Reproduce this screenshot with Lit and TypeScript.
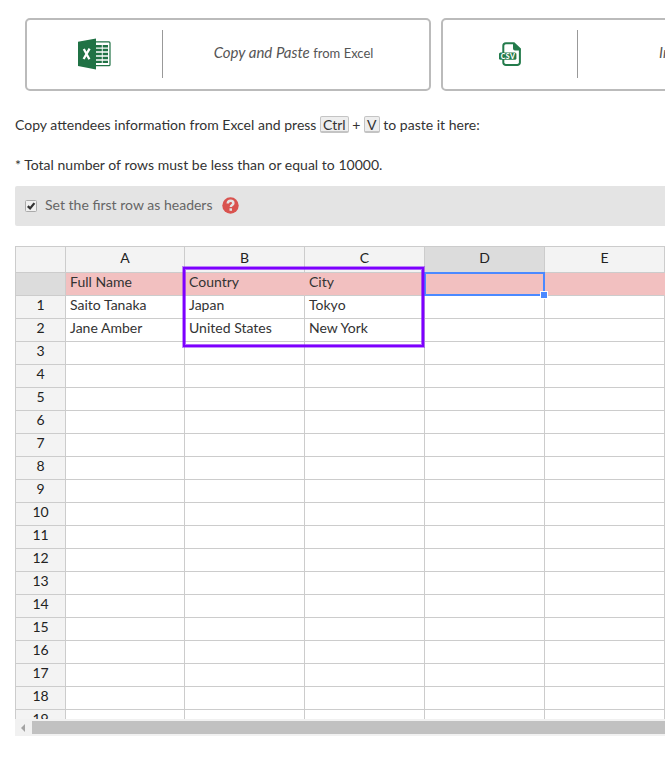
import { LitElement, html, css, svg } from "lit";
import { customElement } from "lit/decorators.js";
import { classMap } from "lit/directives/class-map.js";

const COLUMNS = ["A", "B", "C", "D", "E"];
const DATA = [
  ["Full Name", "Country", "City", "", ""],
  ["Saito Tanaka", "Japan", "Tokyo", "", ""],
  ["Jane Amber", "United States", "New York", "", ""],
];
const ROW_COUNT = 20;

const excelIcon = svg`
  <svg class="excel" width="34" height="32" viewBox="0 0 34 32">
    <rect x="17" y="3.9" width="15" height="23.8" rx="1" fill="#fff" stroke="#207245" stroke-width="1.2"/>
    <path d="M18 7h5.8v2.4h-5.8zM24.7 7h5.3v2.4h-5.3zM18 10.8h5.8v2.5h-5.8zM24.7 10.8h5.3v2.5h-5.3zM18 14.8h5.8v2.5h-5.8zM24.7 14.8h5.3v2.5h-5.3zM18 18.8h5.8v2.5h-5.8zM24.7 18.8h5.3v2.5h-5.3zM18 22.7h5.8v2.4h-5.8zM24.7 22.7h5.3v2.4h-5.3z" fill="#207245"/>
    <path d="M0 3.8L18 .6v30.8L0 28z" fill="#207245"/>
    <path d="M5.8 11l5.6 10.2M11.6 10.7L5.6 21" stroke="#fff" stroke-width="2.3" fill="none"/>
  </svg>`;

const csvIcon = svg`
  <svg class="csv" width="23" height="24" viewBox="0 0 23 24">
    <path d="M6.9 1.2h8l6 5.8v13.4a2.6 2.6 0 0 1-2.6 2.6H6.9a2.6 2.6 0 0 1-2.6-2.6V3.8a2.6 2.6 0 0 1 2.6-2.6z" fill="#fff" stroke="#237b4b" stroke-width="2"/>
    <path d="M14 1v5.5a2 2 0 0 0 2 2h5.4V7L15 1z" fill="#237b4b"/>
    <rect x="0" y="10.4" width="17.4" height="7.4" rx="1.6" fill="#237b4b"/>
    <text x="8.8" y="16.6" text-anchor="middle" textLength="14" font-family="Lato, sans-serif" font-weight="900" font-size="7" fill="#fff">CSV</text>
  </svg>`;

@customElement("app-root")
export class AppRoot extends LitElement {
  static styles = css`
    :host {
      display: block;
      box-sizing: border-box;
      height: 762px;
      padding: 18px 0 0 15px;
      overflow: hidden;
      background: #fff;
      color: #333;
      font: 14px/20px Lato, sans-serif;
      word-spacing: 0.08px;
    }
    .cards {
      display: flex;
      gap: 10px;
      margin-left: 10px;
    }
    .card {
      box-sizing: border-box;
      display: flex;
      align-items: center;
      flex: 0 0 406px;
      height: 73px;
      border: 2px solid #bbb;
      border-radius: 5px;
    }
    .logo {
      box-sizing: border-box;
      display: flex;
      justify-content: center;
      align-items: center;
      flex: none;
      width: 136px;
      height: 48px;
      margin-top: -1px;
      border-right: 1px solid #999;
    }
    .logo.narrow { width: 135px; }
    .logo svg { display: block; }
    .excel { margin-left: 1px; }
    .label {
      flex: 1;
      text-align: center;
      color: #555;
      margin-top: -4px;
      padding-right: 5px;
      font-size: 13px;
      white-space: nowrap;
    }
    .label.start {
      padding: 0 0 0 81px;
      text-align: left;
    }
    .label em { font-size: 15px; }
    p { margin: 0; }
    .intro { margin-top: 24px; }
    .note { margin-top: 20px; }
    kbd {
      display: inline-block;
      box-sizing: border-box;
      height: 17px;
      padding: 0 2px;
      border: 1px solid #c4c4c4;
      border-bottom-width: 2px;
      border-radius: 2px;
      background: #eee;
      font: 14px/15px Lato, sans-serif;
    }
    .option {
      display: flex;
      align-items: center;
      height: 40px;
      margin-top: 11px;
      padding-left: 10px;
      border-radius: 2px 0 0 2px;
      background: #e4e4e4;
      color: #666;
    }
    .option span { margin-top: -2px; }
    .check { margin-right: 8px; }
    .help { margin-left: 9px; margin-top: -2px; }
    .viewport {
      position: relative;
      height: 473px;
      margin-top: 20px;
      overflow: hidden;
    }
    .sheet {
      display: grid;
      grid-template-columns: 50px 119px repeat(4, 120px);
      grid-template-rows: 26px;
      grid-auto-rows: 23px;
      width: 649px;
      border-top: 1px solid #ccc;
      border-left: 1px solid #ccc;
    }
    .cell {
      box-sizing: border-box;
      border-right: 1px solid #ccc;
      border-bottom: 1px solid #ccc;
      padding: 0 4px;
      line-height: 18px;
      white-space: nowrap;
    }
    .head {
      background: #f3f3f3;
      color: #222;
      text-align: center;
    }
    .column { line-height: 22px; }
    .active { background: #dcdcdc; }
    .title {
      background: #f2c0c0;
      border-right-color: #f2c0c0;
    }
    .selection {
      position: absolute;
      box-sizing: border-box;
      left: 409px;
      top: 26px;
      width: 121px;
      height: 24px;
      border: 2px solid #4b89ff;
    }
    .handle {
      position: absolute;
      right: -5px;
      bottom: -5px;
      width: 6px;
      height: 6px;
      border: 1px solid #fff;
      background: #4b89ff;
    }
    .highlight {
      position: absolute;
      box-sizing: border-box;
      left: 168px;
      top: 21px;
      width: 241px;
      height: 80px;
      border: 2px solid #7d00ff;
      box-shadow: 0 0 0 1px rgba(125, 0, 255, 0.45), inset 0 0 0 1px rgba(125, 0, 255, 0.6);
    }
    .scrollbar {
      display: flex;
      align-items: center;
      height: 17px;
      background: #f1f1f1;
    }
    .arrow {
      margin: 0 7px 0 6px;
      border: solid transparent;
      border-width: 4px 4px 4px 0;
      border-right-color: #a3a3a3;
    }
    .thumb {
      flex: 1;
      height: 13px;
      background: #c1c1c1;
    }
  `;

  private renderRow(index: number) {
    const row = DATA[index] ?? COLUMNS.map(() => "");
    return html`
      <div class=${classMap({ cell: true, head: true, active: index === 0 })}>${index || ""}</div>
      ${row.map((text) => html`<div class=${classMap({ cell: true, title: index === 0 })}>${text}</div>`)}
    `;
  }

  render() {
    return html`
      <div class="cards">
        <div class="card">
          <div class="logo">${excelIcon}</div>
          <div class="label"><em>Copy and Paste</em> from Excel</div>
        </div>
        <div class="card">
          <div class="logo narrow">${csvIcon}</div>
          <div class="label start"><em>Import</em> from CSV file</div>
        </div>
      </div>
      <p class="intro">Copy attendees information from Excel and press <kbd>Ctrl</kbd> + <kbd>V</kbd> to paste it here:</p>
      <p class="note">* Total number of rows must be less than or equal to 10000.</p>
      <div class="option">
        <svg class="check" width="12" height="12" viewBox="0 0 12 12">
          <rect x=".5" y=".5" width="11" height="11" rx="1" fill="#f0f0f0" stroke="#aaa"/>
          <path d="M2.8 6.1l2.3 2.3 4.3-5.3" fill="none" stroke="#333" stroke-width="2.3"/>
        </svg>
        <span>Set the first row as headers</span>
        <svg class="help" width="17" height="17" viewBox="0 0 17 17">
          <circle cx="8.5" cy="8.5" r="8.2" fill="#d9534f"/>
          <path d="M5.7 6.5C5.8 4.7 7 3.8 8.6 3.8c1.6 0 2.8.9 2.8 2.4 0 1.8-2.6 1.9-2.6 3.9" fill="none" stroke="#e4e4e4" stroke-width="2.4"/>
          <rect x="7.5" y="11.3" width="2.5" height="2.5" fill="#e4e4e4"/>
        </svg>
      </div>
      <div class="viewport">
        <div class="sheet">
          <div class="cell head column"></div>
          ${COLUMNS.map((name) => html`<div class=${classMap({ cell: true, head: true, column: true, active: name === "D" })}>${name}</div>`)}
          ${Array.from({ length: ROW_COUNT }, (_, i) => this.renderRow(i))}
        </div>
        <div class="selection"><span class="handle"></span></div>
        <div class="highlight"></div>
      </div>
      <div class="scrollbar"><span class="arrow"></span><span class="thumb"></span></div>
    `;
  }
}
